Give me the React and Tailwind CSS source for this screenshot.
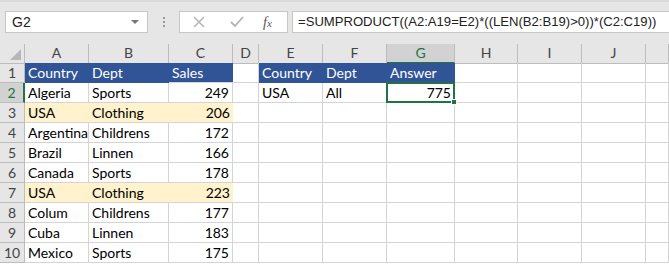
import React from 'react';

const cols = ['A', 'B', 'C', 'D', 'E', 'F', 'G', 'H', 'I', 'J', ''];

const data = [
  ['Algeria', 'Sports', 249],
  ['USA', 'Clothing', 206],
  ['Argentina', 'Childrens', 172],
  ['Brazil', 'Linnen', 166],
  ['Canada', 'Sports', 178],
  ['USA', 'Clothing', 223],
  ['Colum', 'Childrens', 177],
  ['Cuba', 'Linnen', 183],
  ['Mexico', 'Sports', 175],
];

const grid = 'grid grid-cols-[25px_64px_80px_64px_26px_64px_64px_68px_63px_64px_64px_1fr]';

const Cell = ({ children, className = '' }) => (
  <div className={`h-[20px] border-r border-b border-[#d4d4d4] px-[3px] leading-[19px] whitespace-nowrap overflow-visible ${className}`}>
    {children}
  </div>
);

const Blue = ({ children, last }) => (
  <div className={`h-[20px] bg-[#305496] text-white px-[3px] leading-[19px] ${last ? 'border-b border-[#d4d4d4]' : 'border-b border-[#305496]'}`}>
    {children}
  </div>
);

export default function App() {
  return (
    <div className="w-[669px] h-[265px] overflow-hidden bg-white font-['Lato',sans-serif] text-[14px] text-black">
      {/* formula bar */}
      <div className="h-[44px] bg-[#e6e6e6] border-t-2 border-[#d9d9d9] flex items-start pt-[9px] pl-[5px]">
        <div className="shrink-0 w-[143px] h-[22px] bg-white border border-[#c6c6c6] flex items-center justify-between pl-[6px] pr-[8px] font-['Liberation_Sans',sans-serif] text-[14px] text-[#222]">
          <span>G2</span>
          <span className="w-0 h-0 border-l-[4px] border-r-[4px] border-t-[4px] border-l-transparent border-r-transparent border-t-[#777]" />
        </div>
        <div className="shrink-0 w-[31px] h-[22px] flex flex-col items-center justify-center gap-[2px]">
          <span className="w-[2px] h-[2px] bg-[#999]" />
          <span className="w-[2px] h-[2px] bg-[#999]" />
          <span className="w-[2px] h-[2px] bg-[#999]" />
        </div>
        <div className="shrink-0 w-[109px] h-[22px] bg-white border border-[#c6c6c6] flex items-center">
          <svg width="12" height="12" viewBox="0 0 12 12" className="ml-[13px]">
            <path d="M1 1L11 11M11 1L1 11" stroke="#b4b4b4" strokeWidth="1.5" />
          </svg>
          <svg width="14" height="12" viewBox="0 0 14 12" className="ml-[25px]">
            <path d="M1 6L5 10L13 1" stroke="#b4b4b4" strokeWidth="1.8" fill="none" />
          </svg>
          <span className="ml-[19px] font-['Liberation_Serif',serif] italic text-[14px] text-[#555]">f<span className="text-[11px]">x</span></span>
        </div>
        <div className="ml-[4px] flex-1 min-w-0 h-[22px] bg-white border border-[#c6c6c6] border-r-0 pl-[5px] font-['Liberation_Sans',sans-serif] text-[13.1px] leading-[20px] text-[#222] whitespace-nowrap overflow-hidden">
          =SUMPRODUCT((A2:A19=E2)*((LEN(B2:B19)&gt;0))*(C2:C19))
        </div>
      </div>

      {/* column headers */}
      <div className={`${grid} h-[19px] bg-[#e6e6e6] text-[14px] text-[#444]`}>
        <div className="relative border-r border-b border-[#bcbcbc]">
          <div className="absolute right-[3px] bottom-[3px] w-0 h-0 border-b-[11px] border-l-[11px] border-b-[#b7b7b7] border-l-transparent" />
        </div>
        {cols.map((c, i) =>
          c === 'G' ? (
            <div key={i} className="bg-[#d2d2d2] border-r border-[#bcbcbc] border-b-2 border-b-[#217346] text-center leading-[18px] text-[#217346]">G</div>
          ) : (
            <div key={i} className="border-r border-b border-[#bcbcbc] text-center leading-[18px]">{c}</div>
          )
        )}
      </div>

      {/* row 1 */}
      <div className={grid}>
        <div className="h-[20px] bg-[#e6e6e6] border-r border-b border-[#bcbcbc] text-center text-[14px] leading-[19px] text-[#444]">1</div>
        <Blue>Country</Blue>
        <Blue>Dept</Blue>
        <Blue last>Sales</Blue>
        <Cell />
        <Blue>Country</Blue>
        <Blue>Dept</Blue>
        <Blue last>Answer</Blue>
        <Cell />
        <Cell />
        <Cell />
        <Cell />
      </div>

      {data.map((r, i) => {
        const n = i + 2;
        const hl = n === 3 || n === 7;
        return (
          <div key={n} className={grid}>
            {n === 2 ? (
              <div className="h-[20px] bg-[#d2d2d2] border-r-2 border-r-[#217346] border-b border-[#bcbcbc] text-center text-[14px] leading-[19px] text-[#217346]">2</div>
            ) : (
              <div className="h-[20px] bg-[#e6e6e6] border-r border-b border-[#bcbcbc] text-center text-[14px] leading-[19px] text-[#444]">{n}</div>
            )}
            {hl ? (
              <>
                <div className="h-[20px] bg-[#fff2cc] px-[3px] leading-[19px] border-b border-[#d4d4d4]">{r[0]}</div>
                <div className="h-[20px] bg-[#fff2cc] px-[3px] leading-[19px] border-b border-[#d4d4d4]">{r[1]}</div>
                <div className="h-[20px] bg-[#fff2cc] px-[3px] leading-[19px] border-b border-[#d4d4d4] text-right">{r[2]}</div>
              </>
            ) : (
              <>
                <Cell>{r[0]}</Cell>
                <Cell>{r[1]}</Cell>
                <Cell className="text-right">{r[2]}</Cell>
              </>
            )}
            <Cell />
            {n === 2 ? (
              <>
                <Cell>USA</Cell>
                <Cell>All</Cell>
                <div className="relative h-[21px] border-2 border-[#217346] -mt-[1px] -ml-[1px] px-[2px] leading-[18px] text-right">
                  775
                  <span className="absolute -right-[4px] -bottom-[4px] w-[6px] h-[6px] bg-[#217346] border border-white" />
                </div>
              </>
            ) : (
              <>
                <Cell />
                <Cell />
                <Cell />
              </>
            )}
            <Cell />
            <Cell />
            <Cell />
            <Cell />
          </div>
        );
      })}
    </div>
  );
}
